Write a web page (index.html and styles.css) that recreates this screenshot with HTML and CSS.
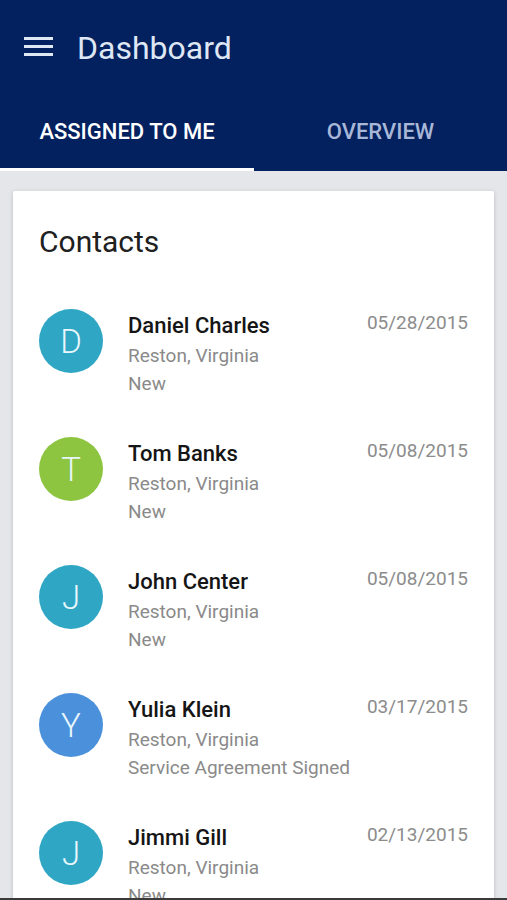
FILE: index.html
```html
<!DOCTYPE html>
<html lang="en">
<head>
<meta charset="utf-8">
<title>Dashboard</title>
<link rel="stylesheet" href="styles.css">
</head>
<body>
<header class="appbar">
  <div class="toolbar">
    <svg class="menu-icon" width="29" height="19" viewBox="0 0 29 19" aria-hidden="true">
      <rect x="0" y="0" width="29" height="3" fill="#dfe7f5"/>
      <rect x="0" y="8" width="29" height="3" fill="#dfe7f5"/>
      <rect x="0" y="16" width="29" height="3" fill="#dfe7f5"/>
    </svg>
    <h1 class="title">Dashboard</h1>
  </div>
  <nav class="tabs">
    <div class="tab active">ASSIGNED TO ME</div>
    <div class="tab">OVERVIEW</div>
  </nav>
</header>
<main class="content">
  <section class="card">
    <h2 class="card-title">Contacts</h2>
    <ul class="contacts">
      <li class="row">
        <div class="avatar teal">D</div>
        <div class="info">
          <div class="name">Daniel Charles</div>
          <div class="sub">Reston, Virginia</div>
          <div class="sub">New</div>
        </div>
        <div class="date">05/28/2015</div>
      </li>
      <li class="row">
        <div class="avatar green">T</div>
        <div class="info">
          <div class="name">Tom Banks</div>
          <div class="sub">Reston, Virginia</div>
          <div class="sub">New</div>
        </div>
        <div class="date">05/08/2015</div>
      </li>
      <li class="row">
        <div class="avatar teal">J</div>
        <div class="info">
          <div class="name">John Center</div>
          <div class="sub">Reston, Virginia</div>
          <div class="sub">New</div>
        </div>
        <div class="date">05/08/2015</div>
      </li>
      <li class="row">
        <div class="avatar blue">Y</div>
        <div class="info">
          <div class="name">Yulia Klein</div>
          <div class="sub">Reston, Virginia</div>
          <div class="sub">Service Agreement Signed</div>
        </div>
        <div class="date">03/17/2015</div>
      </li>
      <li class="row">
        <div class="avatar teal">J</div>
        <div class="info">
          <div class="name">Jimmi Gill</div>
          <div class="sub">Reston, Virginia</div>
          <div class="sub">New</div>
        </div>
        <div class="date">02/13/2015</div>
      </li>
    </ul>
  </section>
</main>
<div class="navbar-edge"></div>
</body>
</html>
```

FILE: styles.css
```css
* { box-sizing: border-box; }

html, body {
  margin: 0;
  padding: 0;
  height: 900px;
  overflow: hidden;
}

body {
  background: #e4e6e9;
  font-family: Roboto, "Noto Sans", "Liberation Sans", sans-serif;
}

.appbar {
  background: #03205f;
}

.toolbar {
  height: 92px;
  display: flex;
  align-items: center;
  padding-left: 24px;
  gap: 24px;
}

.menu-icon { display: block; }

.title {
  margin: 3px 0 0;
  font-size: 32px;
  font-weight: 400;
  line-height: 38px;
  color: #dfe7f5;
}

.tabs {
  display: grid;
  grid-template-columns: 254px 1fr;
  height: 79px;
}

.tab {
  display: flex;
  align-items: center;
  justify-content: center;
  font-size: 22px;
  font-weight: 500;
  color: #a9b7d7;
  border-bottom: 3px solid transparent;
  padding-top: 3px;
}

.tab.active {
  color: #ffffff;
  border-bottom-color: #ffffff;
}

.content {
  padding: 20px 13px 0;
}

.card {
  background: #ffffff;
  box-shadow: 0 1px 4px rgba(0, 0, 0, 0.18);
  padding: 33px 26px 40px;
  border-radius: 2px;
}

.card-title {
  margin: 0 0 49px;
  font-size: 30px;
  font-weight: 400;
  line-height: 36px;
  color: #202020;
}

.contacts {
  list-style: none;
  margin: 0;
  padding: 0;
}

.row {
  display: flex;
  align-items: flex-start;
  padding-bottom: 39px;
}

.avatar {
  width: 64px;
  height: 64px;
  flex: 0 0 64px;
  border-radius: 50%;
  display: flex;
  align-items: center;
  justify-content: center;
  font-size: 33px;
  font-weight: 300;
  color: #e8f7fb;
  margin-right: 25px;
}

.avatar.teal { background: #2fa6c4; }
.avatar.green { background: #8dc540; }
.avatar.blue { background: #4b90db; }

.info {
  flex: 1;
  margin-top: 1px;
}

.name {
  font-size: 22px;
  font-weight: 500;
  line-height: 32px;
  color: #151515;
}

.sub {
  font-size: 19px;
  line-height: 28px;
  color: #8a8a8a;
}

.date {
  font-size: 19px;
  line-height: 28px;
  color: #8c8c8c;
}

.navbar-edge {
  position: fixed;
  left: 0;
  right: 0;
  bottom: 0;
  height: 2px;
  background: #3a3a3a;
}
```
